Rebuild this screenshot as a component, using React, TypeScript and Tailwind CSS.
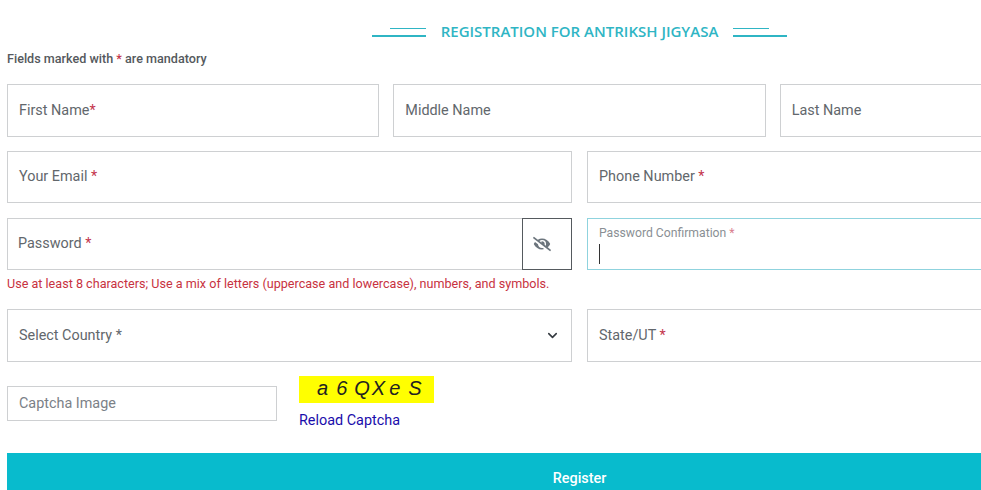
import { ChevronDown } from 'lucide-react'
import { FaEyeSlash } from 'react-icons/fa'

const FONT = "font-['Roboto',sans-serif]"

function Req({ spaced = true }: { spaced?: boolean }) {
  return <span className="text-[#c4354c]">{spaced ? ' *' : '*'}</span>
}

function Field({ label, className = '', children }: { label: string; className?: string; children?: React.ReactNode }) {
  return (
    <div className={`flex items-center justify-between border border-[#ced0d2] bg-white pl-[11px] pr-3 text-[14.4px] text-[#62676c] ${className}`}>
      <span className="whitespace-pre">{label}{children}</span>
    </div>
  )
}

function Lines({ flip }: { flip?: boolean }) {
  return (
    <span className={`mt-[1px] flex w-[54px] flex-col gap-[6px] ${flip ? 'items-start' : 'items-end'}`}>
      <span className="h-px w-[36px] bg-[#2fb5c4]" />
      <span className="h-[2px] w-[54px] bg-[#2fb5c4]" />
    </span>
  )
}

export default function App() {
  return (
    <div className={`h-[490px] w-[981px] overflow-hidden bg-white ${FONT}`}>
      <div className="w-[1152px] pl-[7px]">
        <div className="flex h-[46px] items-center justify-center gap-[15px] pt-[17px]">
          <Lines />
          <h1 className="font-['Open_Sans',sans-serif] text-[15px] font-semibold leading-[29px] text-[#2fb5c4]">
            REGISTRATION FOR ANTRIKSH JIGYASA
          </h1>
          <Lines flip />
        </div>

        <p className="mt-[4px] h-[34px] text-[12.6px] font-medium leading-[18px] text-[#55595d]">
          Fields marked with <span className="text-[#c4354c]">*</span> are mandatory
        </p>

        <div className="flex gap-[14px]">
          <Field label="First Name" className="h-[53px] flex-1"><Req spaced={false} /></Field>
          <Field label="Middle Name" className="h-[53px] flex-1" />
          <Field label="Last Name" className="h-[53px] flex-1" />
        </div>

        <div className="mt-[14px] flex gap-[15px]">
          <Field label="Your Email" className="h-[52px] w-[565px]"><Req /></Field>
          <Field label="Phone Number" className="h-[52px] flex-1"><Req /></Field>
        </div>

        <div className="mt-[15px] flex gap-[15px]">
          <div className="flex h-[52px] w-[565px]">
            <Field label="Password" className="flex-1 border-r-0 !pl-[10px]"><Req /></Field>
            <button className="flex w-[50px] items-center justify-center border border-[#555a5e] pr-[10px] text-[#6c757d]">
              <FaEyeSlash size={18} />
            </button>
          </div>
          <div className="h-[52px] flex-1 border border-[#8fd3de] pl-[11px] pt-[6px]">
            <div className="text-[12.2px] leading-[16px] text-[#8a8f94]">
              Password Confirmation <span className="text-[#d9808f]">*</span>
            </div>
            <div className="mt-[3px] h-[20px] w-px bg-[#333]" />
          </div>
        </div>

        <p className="mt-[5px] h-[34px] text-[12.6px] leading-[18px] text-[#c8323f]">
          Use at least 8 characters; Use a mix of letters (uppercase and lowercase), numbers, and symbols.
        </p>

        <div className="flex gap-[15px]">
          <div className="flex h-[53px] w-[565px] items-center justify-between border border-[#ced0d2] pl-[11px] pr-[11px] text-[14.4px] text-[#62676c]">
            <span>Select Country *</span>
            <ChevronDown size={15} strokeWidth={2.5} className="text-[#343a40]" />
          </div>
          <Field label="State/UT" className="h-[53px] flex-1"><Req /></Field>
        </div>

        <div className="mt-[14px] flex h-[53px] gap-[22px]">
          <div className="mt-[10px] flex h-[35px] w-[270px] items-center border border-[#ced0d2] pl-[11px] text-[14.4px] text-[#7b8187]">
            Captcha Image
          </div>
          <div>
            <div className="flex h-[27px] w-[135px] items-center gap-[7px] bg-[#ffff00] pb-[4px] pl-[18px] font-['Liberation_Sans',sans-serif] text-[20px] italic text-[#222]">
              <span>a</span><span className="ml-[1px]">6</span><span>Q</span><span className="-ml-[5px]">X</span><span className="-ml-[3px]">e</span><span className="ml-[1px]">S</span>
            </div>
            <a href="#" className="mt-[8px] block text-[14.4px] leading-[20px] text-[#1a0dab]">Reload Captcha</a>
          </div>
        </div>

        <button className="mt-[24px] flex h-[50px] w-full items-center justify-center bg-[#08bbcd] pt-[1px] text-[14.4px] font-medium text-white">
          Register
        </button>
      </div>
    </div>
  )
}
